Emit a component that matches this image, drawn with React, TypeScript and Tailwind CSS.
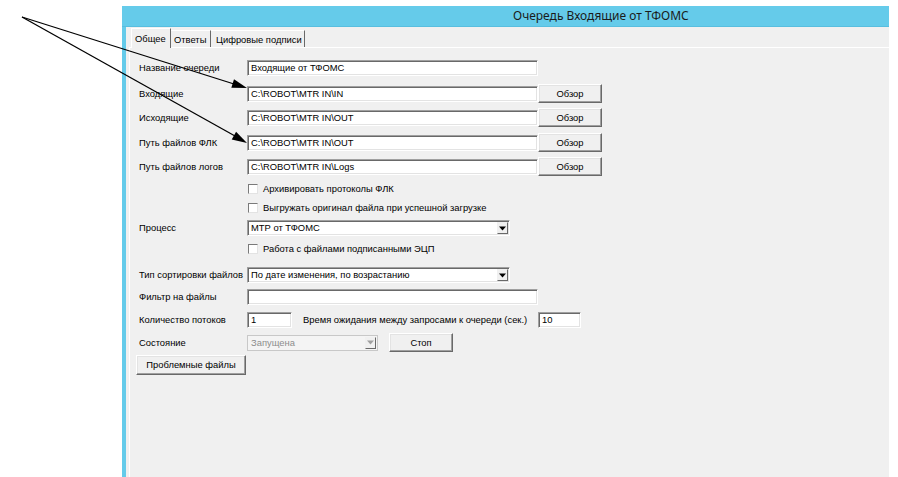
import React from "react";

const sunken =
  "bg-white border border-t-[#a0a0a0] border-l-[#a0a0a0] border-b-white border-r-white shadow-[inset_1px_1px_0_#696969,inset_-1px_-1px_0_#e3e3e3]";
const raised =
  "bg-[#f0f0f0] border border-t-white border-l-white border-b-[#696969] border-r-[#696969] shadow-[inset_-1px_-1px_0_#a0a0a0,inset_1px_1px_0_#e3e3e3]";

function TextBox({ value = "", w }: { value?: string; w: string }) {
  return (
    <div className={`${sunken} ${w} shrink-0 h-[16px] flex items-center pl-[3px] text-black leading-none`}>
      {value}
    </div>
  );
}

function Btn({ label, w, h }: { label: string; w: string; h: string }) {
  return (
    <div className={`${raised} ${w} ${h} shrink-0 flex items-center justify-center text-black leading-none`}>
      {label}
    </div>
  );
}

function Arrow({ disabled = false }: { disabled?: boolean }) {
  return (
    <div className="w-[11px] h-full flex items-center justify-center bg-[#f0f0f0] border border-t-[#f0f0f0] border-l-[#f0f0f0] border-b-[#696969] border-r-[#696969]">
      <svg width="7" height="5" viewBox="0 0 7 5">
        <path d="M0 0.5 H7 L3.5 4.5 Z" fill={disabled ? "#a0a0a0" : "#000"} />
      </svg>
    </div>
  );
}

function Select({ value, w, disabled = false }: { value: string; w: string; disabled?: boolean }) {
  return (
    <div
      className={`${
        disabled ? "bg-[#f4f4f4] border border-[#c8c8c8]" : sunken
      } ${w} shrink-0 h-[16px] flex items-center leading-none p-[1px]`}
    >
      <div className={`flex-1 pl-[2px] ${disabled ? "text-[#8d8d8d]" : "text-black"}`}>{value}</div>
      <Arrow disabled={disabled} />
    </div>
  );
}

function Check({ label }: { label: string }) {
  return (
    <div className="flex items-center h-[14px]">
      <div className="w-[112px] shrink-0" />
      <div className="w-[10px] h-[10px] shrink-0 bg-white border border-t-[#7a7a7a] border-l-[#7a7a7a] border-b-[#e3e3e3] border-r-[#e3e3e3]" />
      <div className="ml-[5px] text-black leading-none whitespace-nowrap">{label}</div>
    </div>
  );
}

function Label({ text }: { text: string }) {
  return <div className="ml-[3px] w-[108px] shrink-0 text-black leading-none whitespace-nowrap">{text}</div>;
}

export default function App() {
  return (
    <div className="relative w-[898px] h-[477px] bg-white overflow-hidden pt-[6px] pl-[122px] font-['Liberation_Sans',Arial,sans-serif] text-[9.4px]">
      <div className="w-[767px] h-[471px] flex flex-col">
        {/* title bar */}
        <div className="h-[21px] bg-[#65cbea] border-b border-[#58bedf] flex items-center pl-[391px] font-['Noto_Sans',sans-serif] text-[12px] text-[#1b1b1b]">
          Очередь Входящие от ТФОМС
        </div>
        <div className="flex-1 flex">
          <div className="w-[4px] bg-[#65cbea]" />
          <div className="flex-1 flex flex-col bg-[#f0f0f0] pl-[3px]">
            {/* tabs */}
            <div className="h-[20px] flex items-end pl-[2px]">
              <div className="relative z-10 -mb-[1px] h-[20px] w-[40px] bg-[#f0f0f0] border-t border-l border-white border-r border-r-[#696969] pl-[3px] pt-[5px] leading-none text-black">
                Общее
              </div>
              <div className="h-[17px] w-[40px] border-t border-white border-r border-r-[#696969] pl-[3px] pt-[4px] leading-none text-black">
                Ответы
              </div>
              <div className="h-[17px] w-[94px] border-t border-white border-r border-r-[#696969] pl-[5px] pt-[4px] leading-none text-black whitespace-nowrap">
                Цифровые подписи
              </div>
            </div>
            {/* panel */}
            <div className="flex-1 border-t border-l border-white pl-[6px] flex flex-col">
              <div className="mt-[11px] h-[18px] flex items-center">
                <Label text="Название очереди" />
                <TextBox value="Входящие от ТФОМС" w="w-[291px]" />
              </div>
              <div className="mt-[7px] h-[19px] flex items-center">
                <Label text="Входящие" />
                <TextBox value="C:\ROBOT\MTR IN\IN" w="w-[291px]" />
                <Btn label="Обзор" w="w-[64px]" h="h-[19px]" />
              </div>
              <div className="mt-[5px] h-[19px] flex items-center">
                <Label text="Исходящие" />
                <TextBox value="C:\ROBOT\MTR IN\OUT" w="w-[291px]" />
                <Btn label="Обзор" w="w-[64px]" h="h-[19px]" />
              </div>
              <div className="mt-[6px] h-[19px] flex items-center">
                <Label text="Путь файлов ФЛК" />
                <TextBox value="C:\ROBOT\MTR IN\OUT" w="w-[291px]" />
                <Btn label="Обзор" w="w-[64px]" h="h-[19px]" />
              </div>
              <div className="mt-[5px] h-[19px] flex items-center">
                <Label text="Путь файлов логов" />
                <TextBox value="C:\ROBOT\MTR IN\Logs" w="w-[291px]" />
                <Btn label="Обзор" w="w-[64px]" h="h-[19px]" />
              </div>
              <div className="mt-[6px]">
                <Check label="Архивировать протоколы ФЛК" />
              </div>
              <div className="mt-[5px]">
                <Check label="Выгружать оригинал файла при успешной загрузке" />
              </div>
              <div className="mt-[5px] h-[16px] flex items-center">
                <Label text="Процесс" />
                <Select value="МТР от ТФОМС" w="w-[263px]" />
              </div>
              <div className="mt-[6px]">
                <Check label="Работа с файлами подписанными ЭЦП" />
              </div>
              <div className="mt-[11px] h-[16px] flex items-center">
                <Label text="Тип сортировки файлов" />
                <Select value="По дате изменения, по возрастанию" w="w-[263px]" />
              </div>
              <div className="mt-[6px] h-[16px] flex items-center">
                <Label text="Фильтр на файлы" />
                <TextBox w="w-[291px]" />
              </div>
              <div className="mt-[7px] h-[16px] flex items-center">
                <Label text="Количество потоков" />
                <TextBox value="1" w="w-[45px]" />
                <div className="ml-[11px] w-[235px] shrink-0 text-black leading-none whitespace-nowrap">
                  Время ожидания между запросами к очереди (сек.)
                </div>
                <TextBox value="10" w="w-[43px]" />
              </div>
              <div className="mt-[5px] h-[19px] flex items-center">
                <Label text="Состояние" />
                <Select value="Запущена" w="w-[131px]" disabled />
                <div className="ml-[11px]">
                  <Btn label="Стоп" w="w-[64px]" h="h-[19px]" />
                </div>
              </div>
              <div className="mt-[3px]">
                <Btn label="Проблемные файлы" w="w-[110px]" h="h-[20px]" />
              </div>
            </div>
          </div>
        </div>
      </div>

      {/* annotation arrows */}
      <svg
        className="absolute left-0 top-0 pointer-events-none"
        width="898"
        height="477"
        viewBox="0 0 898 477"
      >
        <line x1="22" y1="17" x2="234" y2="84" stroke="#000" strokeWidth="1.3" />
        <polygon points="247,88 231.3,87.8 234.0,79.2" fill="#000" />
        <line x1="22" y1="17" x2="235" y2="136" stroke="#000" strokeWidth="1.3" />
        <polygon points="247,143 231.7,139.6 236.1,131.7" fill="#000" />
      </svg>
    </div>
  );
}
